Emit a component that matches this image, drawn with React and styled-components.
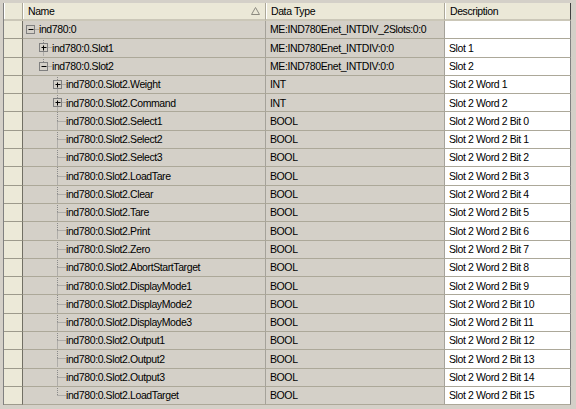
import React from 'react';
import styled, { createGlobalStyle } from 'styled-components';

const GlobalStyle = createGlobalStyle`
  html, body {
    margin: 0;
    padding: 0;
    background: #d4d0c8;
  }
`;

const ROW_H = 18.3;

const Frame = styled.div`
  width: 576px;
  height: 409px;
  box-sizing: border-box;
  padding: 3px 0 0 3px;
  background: #d4d0c8;
  overflow: hidden;
  font-family: 'Liberation Sans', Arial, sans-serif;
  font-size: 10.5px;
  letter-spacing: -0.4px;
  color: #000;
`;

const Grid = styled.div`
  display: grid;
  grid-template-columns: 19px 243px 179px 126px;
  grid-template-rows: 18px;
  grid-auto-rows: ${ROW_H}px;
  width: 568px;
  border-left: 1px solid #808080;
`;

const HeadCell = styled.div`
  box-sizing: border-box;
  display: flex;
  align-items: center;
  justify-content: space-between;
  padding: 0 ${(p) => (p.$pad ? 5 : 0)}px;
  background: #ebe8d7;
  border-bottom: 2px solid #cbc7b8;
  border-right: 1px solid ${(p) => (p.$last ? '#404040' : '#aca899')};
  box-shadow: inset 1px 0 #fff;
  white-space: nowrap;
`;

const RowHead = styled.div`
  box-sizing: border-box;
  background: #ece9d8;
  border-right: 1px solid #716f64;
  border-bottom: 1px solid #9d9a8c;
`;

const Cell = styled.div`
  box-sizing: border-box;
  display: flex;
  align-items: center;
  padding-left: ${(p) => (p.$tree ? 0 : 4)}px;
  background: ${(p) => (p.$white ? '#ffffff' : '#d4d0c8')};
  border-bottom: 1px solid #aca899;
  border-right: 1px solid ${(p) => (p.$last ? '#808080' : '#a5a29a')};
  white-space: nowrap;
  overflow: hidden;
`;

const Label = styled.span`
  line-height: 1;
`;

const SortArrow = () => (
  <svg width="9" height="8" viewBox="0 0 9 8">
    <path d="M4.5 0.5 L8.5 7.5 L0.5 7.5 Z" fill="none" stroke="#8c8a80" strokeWidth="1" />
  </svg>
);

const CENTERS = [7, 20, 34];

const TreeGuide = ({ level, last, box, open }) => {
  const cx = CENTERS[level] + 0.5;
  const w = CENTERS[level] + 9;
  const h = 18;
  const cy = 9.5;
  return (
    <svg width={w} height={h} viewBox={`0 0 ${w} ${h}`} style={{ flex: 'none', marginTop: -1 }}>
      <g stroke="#8a8a8a" strokeWidth="1" strokeDasharray="1 1" fill="none">
        {level > 0 && <line x1={cx} y1="0" x2={cx} y2={cy} />}
        {level > 0 && !last && <line x1={cx} y1={cy} x2={cx} y2={h} />}
        <line x1={cx} y1={cy} x2={w} y2={cy} />
      </g>
      {box && (
        <g>
          <rect x={cx - 4} y={cy - 4} width="8" height="8" fill="#d4d0c8" stroke="#808080" />
          <line x1={cx - 2} y1={cy} x2={cx + 3} y2={cy} stroke="#000" />
          {!open && <line x1={cx} y1={cy - 2} x2={cx} y2={cy + 3} stroke="#000" />}
        </g>
      )}
    </svg>
  );
};

const bits = [
  'Select1', 'Select2', 'Select3', 'LoadTare', 'Clear', 'Tare', 'Print', 'Zero',
  'AbortStartTarget', 'DisplayMode1', 'DisplayMode2', 'DisplayMode3',
  'Output1', 'Output2', 'Output3', 'LoadTarget',
];

const rows = [
  { name: 'ind780:0', level: 0, last: true, box: true, open: true, type: 'ME:IND780Enet_INTDIV_2Slots:0:0', desc: '' },
  { name: 'ind780:0.Slot1', level: 1, box: true, type: 'ME:IND780Enet_INTDIV:0:0', desc: 'Slot 1' },
  { name: 'ind780:0.Slot2', level: 1, last: true, box: true, open: true, type: 'ME:IND780Enet_INTDIV:0:0', desc: 'Slot 2' },
  { name: 'ind780:0.Slot2.Weight', level: 2, box: true, type: 'INT', desc: 'Slot 2 Word 1' },
  { name: 'ind780:0.Slot2.Command', level: 2, box: true, type: 'INT', desc: 'Slot 2 Word 2' },
  ...bits.map((b, i) => ({
    name: `ind780:0.Slot2.${b}`,
    level: 2,
    last: i === bits.length - 1,
    type: 'BOOL',
    desc: `Slot 2 Word 2 Bit ${i}`,
  })),
];

export default function App() {
  return (
    <Frame>
      <GlobalStyle />
      <Grid>
        <HeadCell />
        <HeadCell $pad>
          <Label>Name</Label>
          <SortArrow />
        </HeadCell>
        <HeadCell $pad>
          <Label>Data Type</Label>
        </HeadCell>
        <HeadCell $pad $last>
          <Label>Description</Label>
        </HeadCell>
        {rows.map((r) => (
          <React.Fragment key={r.name}>
            <RowHead />
            <Cell $tree>
              <TreeGuide level={r.level} last={r.last} box={r.box} open={r.open} />
              <Label>{r.name}</Label>
            </Cell>
            <Cell>
              <Label>{r.type}</Label>
            </Cell>
            <Cell $white $last>
              <Label>{r.desc}</Label>
            </Cell>
          </React.Fragment>
        ))}
      </Grid>
    </Frame>
  );
}
